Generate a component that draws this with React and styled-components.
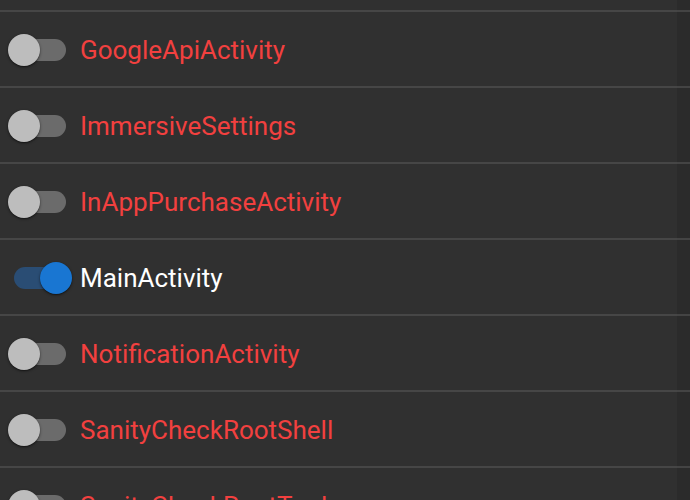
import React from "react";
import styled, { createGlobalStyle } from "styled-components";

const GlobalStyle = createGlobalStyle`
  html, body {
    margin: 0;
    padding: 0;
    background: #303030;
    overflow: hidden;
  }
  body {
    font-family: Roboto, "Noto Sans", sans-serif;
  }
`;

const activities = [
  { name: "GoogleApiActivity", enabled: false },
  { name: "ImmersiveSettings", enabled: false },
  { name: "InAppPurchaseActivity", enabled: false },
  { name: "MainActivity", enabled: true },
  { name: "NotificationActivity", enabled: false },
  { name: "SanityCheckRootShell", enabled: false },
  { name: "SanityCheckRootTools", enabled: false },
];

const Screen = styled.div`
  display: flex;
  width: 690px;
  height: 500px;
  overflow: hidden;
  background: #303030;
`;

const List = styled.div`
  flex: 1;
  padding-top: 10px;
`;

const Gutter = styled.div`
  width: 13px;
  flex-shrink: 0;
  padding-top: 10px;
  background: #2b2b2b;
`;

const GutterLine = styled.div`
  height: 76px;
  box-sizing: border-box;
  border-top: 2px solid #444;
`;

const Row = styled.div`
  display: flex;
  align-items: center;
  height: 76px;
  box-sizing: border-box;
  border-top: 2px solid #464646;
  padding-left: 8px;
  padding-top: 2px;
`;

const SwitchRoot = styled.div`
  position: relative;
  width: 58px;
  height: 32px;
  flex-shrink: 0;
`;

const Track = styled.div`
  position: absolute;
  left: 6px;
  top: 5px;
  width: 52px;
  height: 22px;
  border-radius: 11px;
  background: ${({ on }) => (on ? "#2a4d74" : "#6b6b6b")};
`;

const Thumb = styled.div`
  position: absolute;
  top: 0;
  left: ${({ on }) => (on ? "32px" : "0")};
  width: 32px;
  height: 32px;
  border-radius: 50%;
  background: ${({ on }) => (on ? "#1976d2" : "#bdbdbd")};
  box-shadow: 0 1px 3px rgba(0, 0, 0, 0.45), 0 1px 1px rgba(0, 0, 0, 0.25);
`;

const Label = styled.span`
  margin-left: 14px;
  font-size: 26px;
  line-height: 30px;
  color: ${({ on }) => (on ? "#ffffff" : "#f2403f")};
  white-space: nowrap;
`;

const Switch = ({ on }) => (
  <SwitchRoot>
    <Track on={on} />
    <Thumb on={on} />
  </SwitchRoot>
);

const App = () => (
  <>
    <GlobalStyle />
    <Screen>
      <List>
        {activities.map((a) => (
          <Row key={a.name}>
            <Switch on={a.enabled} />
            <Label on={a.enabled}>{a.name}</Label>
          </Row>
        ))}
      </List>
      <Gutter>
        {activities.map((a) => (
          <GutterLine key={a.name} />
        ))}
      </Gutter>
    </Screen>
  </>
);

export default App;
